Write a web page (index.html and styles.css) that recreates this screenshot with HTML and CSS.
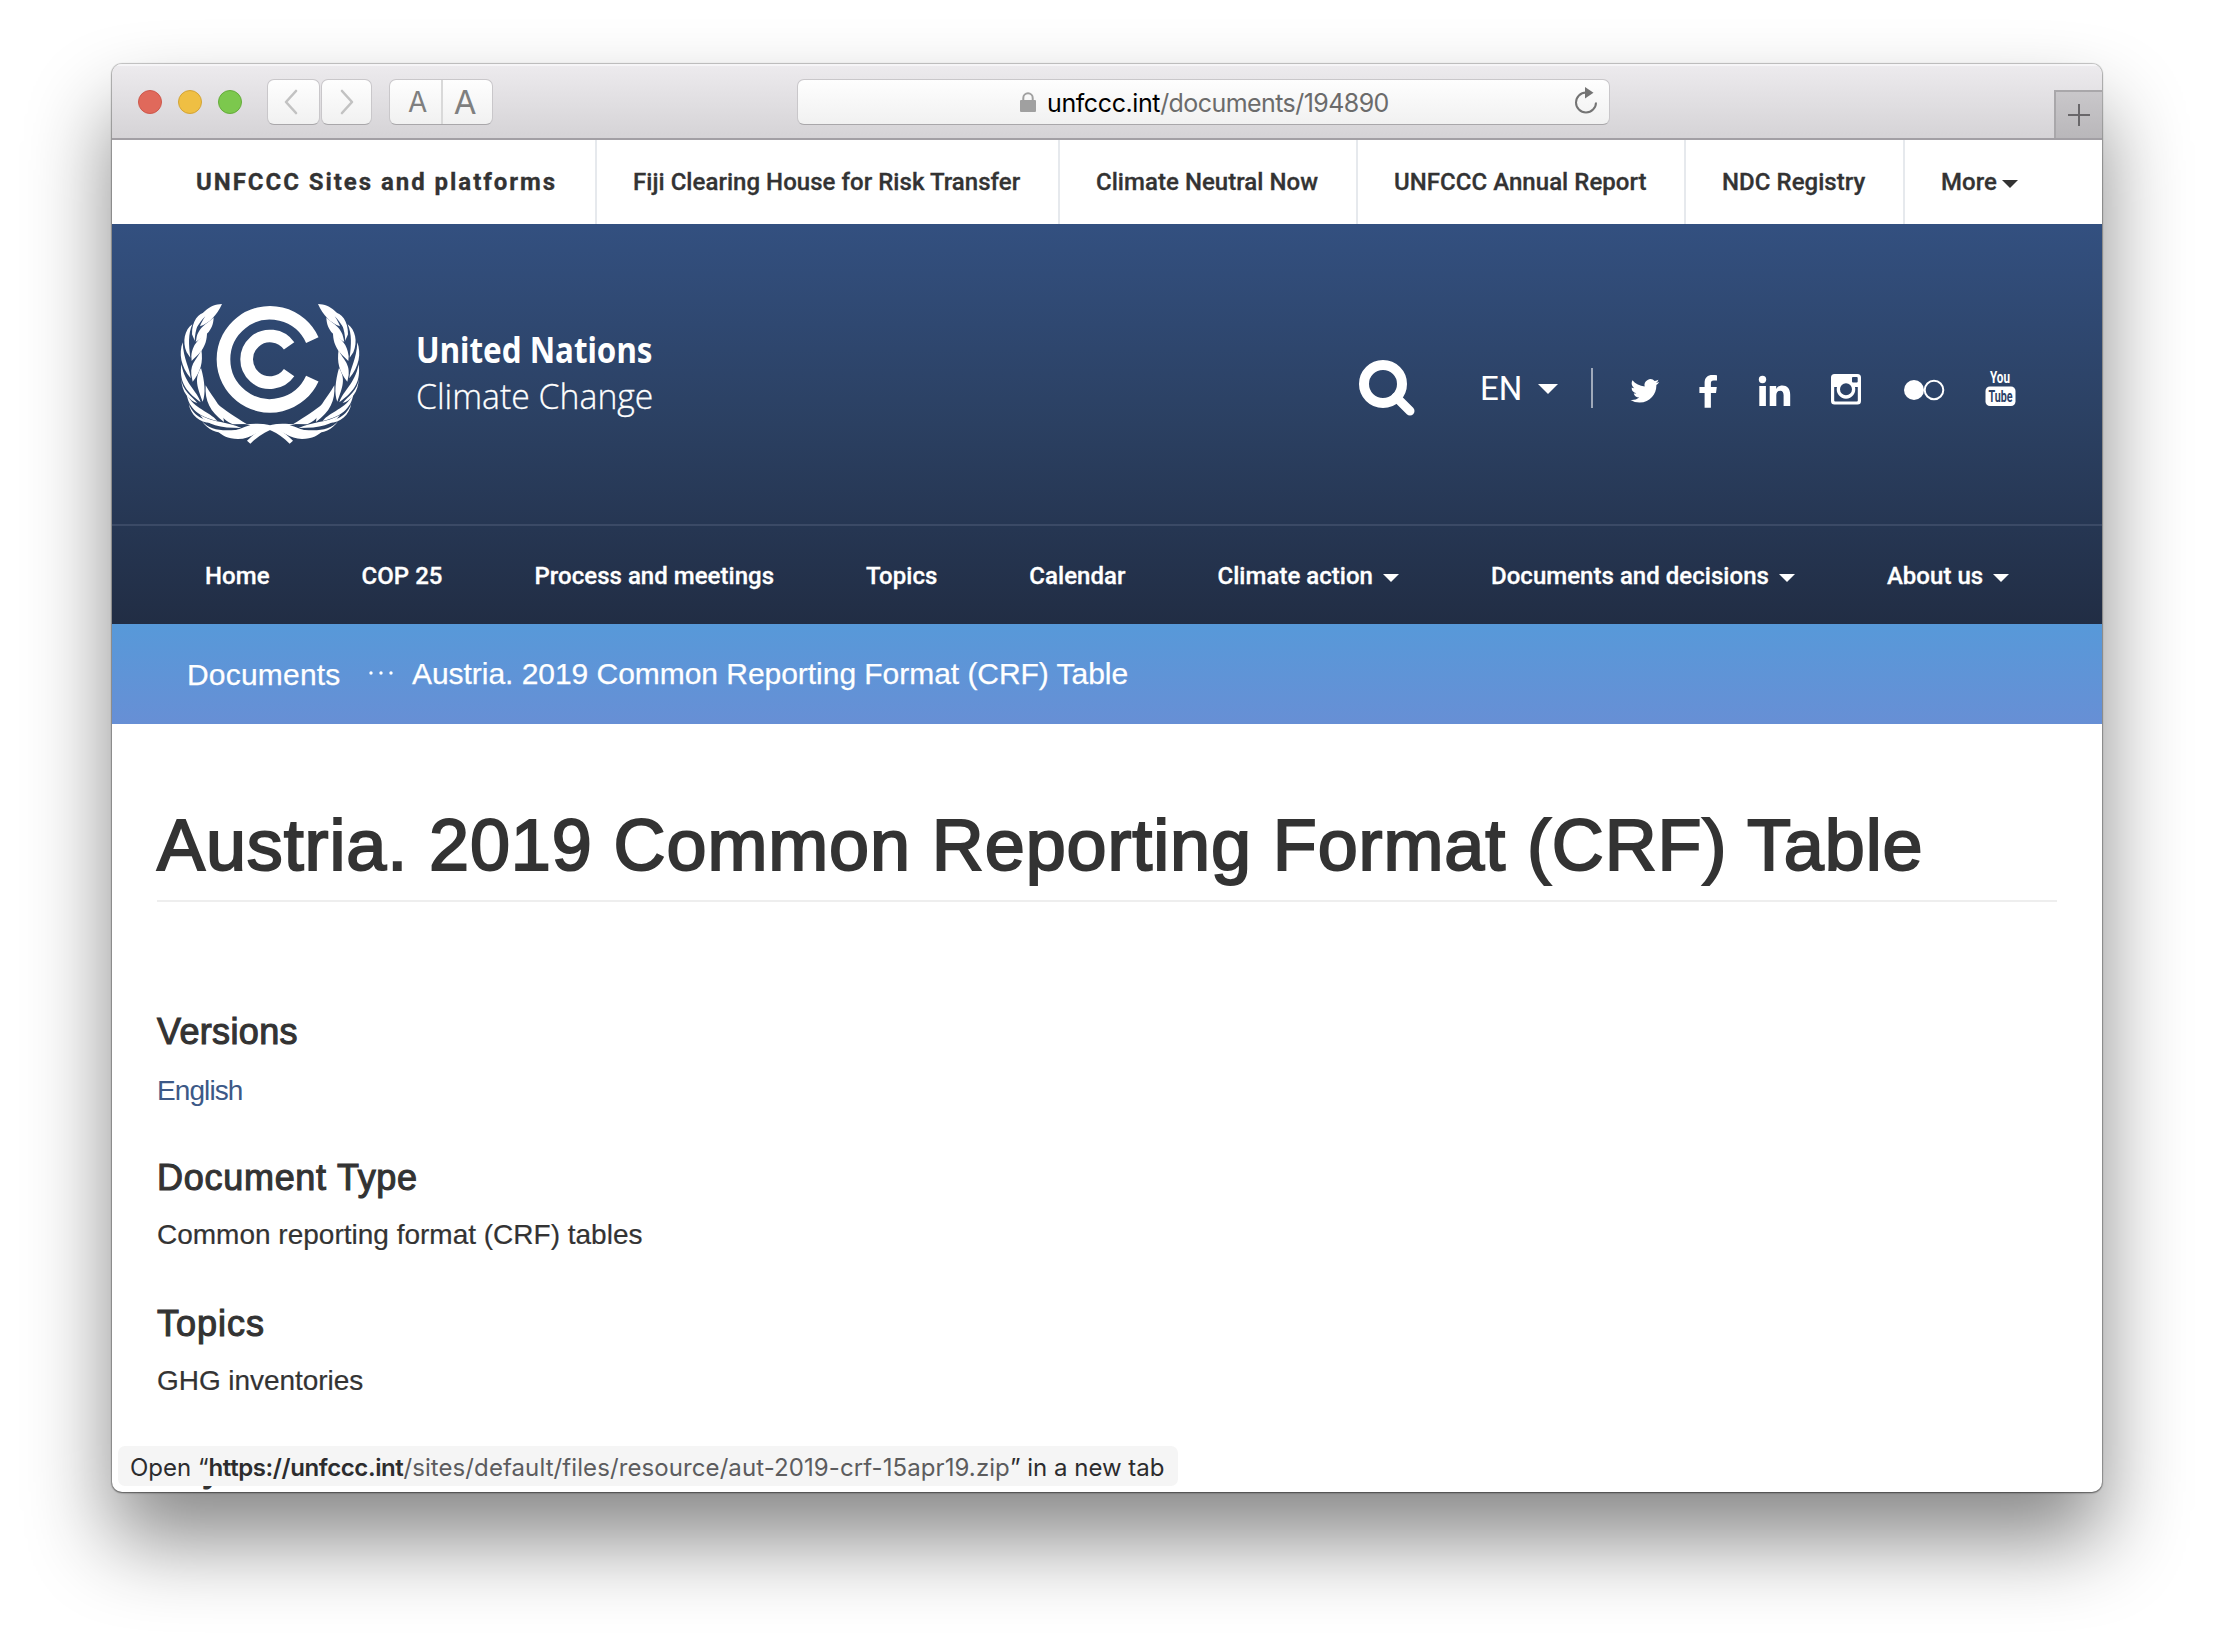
FILE: index.html
```html
<!DOCTYPE html>
<html lang="en">
<head>
<meta charset="utf-8">
<title>Austria. 2019 Common Reporting Format (CRF) Table</title>
<link rel="stylesheet" href="styles.css">
</head>
<body>
<div class="window">
  <div class="toolbar">
    <div class="lights"><i class="light red"></i><i class="light yellow"></i><i class="light green"></i></div>
    <div class="history">
      <button class="tool back"><svg width="16" height="26" viewBox="0 0 16 26"><path d="M13 2 3 13l10 11"/></svg></button>
      <button class="tool"><svg width="16" height="26" viewBox="0 0 16 26"><path d="M3 2l10 11L3 24"/></svg></button>
    </div>
    <div class="tool zoomer"><span class="small-a">A</span><span class="big-a">A</span></div>
    <div class="tool address">
      <svg class="lock" width="16" height="20" viewBox="0 0 16 20"><path d="M3.3 9V6a4.7 4.7 0 0 1 9.4 0v3" fill="none" stroke="#a0a0a0" stroke-width="2"/><rect y="8" width="16" height="12" rx="1" fill="#a0a0a0"/></svg>
      <span class="url">unfccc.int<span class="url-path">/documents/194890</span></span>
      <svg class="reload" width="24" height="28" viewBox="0 0 24 28"><path d="M12 5.5A10 10 0 1 0 22 15.500" fill="none" stroke="#747474" stroke-width="2"/><path d="M11 0l8.500 5.800L11 11.500z" fill="#747474"/></svg>
    </div>
    <div class="newtab"><svg width="22" height="22" viewBox="0 0 22 22"><path d="M11 0v22M0 11h22" stroke="#69676a" stroke-width="2"/></svg></div>
  </div>

  <nav class="sites">
    <a class="lead">UNFCCC Sites and platforms</a>
    <a>Fiji Clearing House for Risk Transfer</a>
    <a>Climate Neutral Now</a>
    <a>UNFCCC Annual Report</a>
    <a>NDC Registry</a>
    <a>More<i class="caret"></i></a>
  </nav>

  <header class="masthead">
    <div class="brandbar">
      <svg class="emblem" width="200" height="155" viewBox="0 0 600 465">
        <defs>
          <g id="branch" fill="#fff">
            <path d="M156 27C118 28 86 56 80 97C88 86 96 74 106 64C98 76 93 86 90 94C118 84 140 62 156 27Z"/>
            <path d="M110 51C84 54 66 78 66 118C70 128 73 134 74 138C76 104 84 76 110 51Z"/>
            <path d="M131 67C120 82 84 94 79 132L77 141C100 126 130 112 131 67Z"/>
            <path d="M67 88C44 104 36 140 50 172L61 188C56 148 54 118 67 88Z"/>
            <path d="M111 110C98 128 68 138 64 184L65 198C84 178 112 160 111 110Z"/>
            <path d="M38 142C26 176 32 214 62 250C60 220 40 194 38 142Z"/>
            <path d="M94 163C86 190 60 202 64 240L68 260C92 230 100 204 94 163Z"/>
            <path d="M34 208C28 256 42 286 92 322C80 286 46 268 34 208Z"/>
            <path d="M93 219C72 252 82 276 98 320C108 296 104 258 93 219Z"/>
            <path d="M34 252C36 286 66 304 82 324C58 318 34 290 34 252Z"/>
            <path d="M50 297C56 342 90 366 142 378C118 348 74 344 50 297Z"/>
            <path d="M107 271C104 318 120 350 162 381C160 338 130 312 107 271Z"/>
            <path d="M56 324C68 364 104 376 134 382C98 389 62 366 56 324Z"/>
            <path d="M90 360C110 390 150 399 214 399C176 380 130 384 90 360Z"/>
            <path d="M143 327C144 354 158 375 188 388L230 387C196 366 164 346 143 327Z"/>
            <path d="M96 378C122 410 166 409 224 402C188 422 122 422 96 378Z"/>
            <path d="M140 405C176 422 212 398 244 389C268 384 288 388 300 394C268 406 240 432 204 432C174 432 152 420 140 405Z"/>
            <path d="M231 437C256 412 280 396 306 389C330 384 352 386 378 389C340 390 288 398 241 446Z"/>
          </g>
        </defs>
        <use href="#branch"/>
        <use href="#branch" transform="translate(600 0) scale(-1 1)"/>
        <path d="M426.900 135.200A139.500 139.500 0 1 0 426.900 250.800" fill="none" stroke="#fff" stroke-width="41"/>
        <path d="M357.300 152.900A70 70 0 1 0 357.300 233.100" fill="none" stroke="#fff" stroke-width="38"/>
      </svg>
      <div class="brand"><strong>United Nations</strong><span>Climate Change</span></div>
      <div class="tools">
        <svg class="search" width="58" height="58" viewBox="0 0 58 58"><circle cx="25" cy="25" r="19" fill="none" stroke="#fff" stroke-width="10"/><path d="M38 38l14 14" stroke="#fff" stroke-width="9" stroke-linecap="round"/></svg>
        <span class="lang">EN</span><i class="caret big"></i>
        <svg class="social" width="428" height="42" viewBox="1591 367 428 42" fill="#fff">
          <path d="M1591 368h2v40h-2z" opacity=".55"/>
          <path transform="translate(1630.500 376.500) scale(1.200)" d="M23.950 4.570a10 10 0 0 1-2.820.770 4.950 4.950 0 0 0 2.160-2.720c-.950.550-2 .950-3.120 1.180a4.920 4.920 0 0 0-8.380 4.480C7.690 8.100 4.070 6.130 1.640 3.160a4.820 4.820 0 0 0-.670 2.480c0 1.710.870 3.210 2.190 4.100a4.900 4.900 0 0 1-2.230-.620v.060a4.920 4.920 0 0 0 3.950 4.830 5 5 0 0 1-2.210.080 4.940 4.940 0 0 0 4.600 3.420A9.870 9.870 0 0 1 0 19.540a13.990 13.990 0 0 0 7.550 2.210c9.050 0 14-7.500 14-13.980 0-.210 0-.420-.020-.630a9.940 9.940 0 0 0 2.420-2.570z"/>
          <path d="M1717 375.300v5.300h-3.200c-2.400 0-2.900 1.200-2.900 2.800v3.700h5.900l-.800 6h-5.100v14.600h-6.300v-14.600h-5.200v-6h5.200v-4.500c0-5.100 3.200-7.700 7.700-7.700 2.200 0 4.100.2 4.700.4z"/>
          <circle cx="1762.500" cy="379.500" r="3.700"/>
          <path d="M1759.300 386h6.600v20h-6.600zM1769.700 386h6.500v2.900c1-1.700 2.900-3.400 6.200-3.400 4.500 0 7.800 3 7.800 9.200v11.300h-6.600v-10.700c0-2.700-1-4.500-3.400-4.500-2.500 0-3.900 1.700-3.900 4.500v10.700h-6.600z"/>
          <path transform="translate(-.5 0)" fill-rule="evenodd" d="M1835 374h23a3.500 3.500 0 0 1 3.500 3.500v23.500a3.500 3.500 0 0 1-3.500 3.500h-23a3.500 3.500 0 0 1-3.500-3.500v-23.500a3.500 3.500 0 0 1 3.500-3.500zM1853.500 377a1 1 0 0 0-1 1v3.500a1 1 0 0 0 1 1h3.700a1 1 0 0 0 1-1v-3.500a1 1 0 0 0-1-1zM1834.700 387v13.500a1 1 0 0 0 1 1h21.600a1 1 0 0 0 1-1v-13.500h-2.800a9.300 9.300 0 1 1-18 0zM1846.500 383.300a6 6 0 1 0 0 12 6 6 0 0 0 0-12z"/>
          <circle cx="1914" cy="390" r="10"/><circle cx="1934" cy="390" r="9.300" fill="none" stroke="#fff" stroke-width="2"/>
          <rect x="1985.500" y="386.500" width="30" height="19.500" rx="4.500"/>
          <text class="yt" x="1990" y="382.500" textLength="20" lengthAdjust="spacingAndGlyphs">You</text>
          <text class="yt tube" x="1988.500" y="402" textLength="24" lengthAdjust="spacingAndGlyphs">Tube</text>
        </svg>
      </div>
    </div>
    <nav class="main">
      <a>Home</a><a>COP 25</a><a>Process and meetings</a><a>Topics</a><a>Calendar</a>
      <a>Climate action<i class="caret"></i></a><a>Documents and decisions<i class="caret"></i></a><a>About us<i class="caret"></i></a>
    </nav>
  </header>

  <div class="crumbs"><a>Documents</a><svg width="26" height="4" viewBox="0 0 26 4" fill="#fff"><circle cx="2" cy="2" r="1.700"/><circle cx="12" cy="2" r="1.700"/><circle cx="22" cy="2" r="1.700"/></svg><span>Austria. 2019 Common Reporting Format (CRF) Table</span></div>

  <main class="content">
    <h1>Austria. 2019 Common Reporting Format (CRF) Table</h1>
    <h2 class="w-versions">Versions</h2>
    <p class="english"><a class="link">English</a></p>
    <h2 class="w-type">Document Type</h2>
    <p>Common reporting format (CRF) tables</p>
    <h2 class="w-topics">Topics</h2>
    <p class="ghg">GHG inventories</p>
    <h2>Keywords</h2>
  </main>
  <div class="status">Open “<b>https://unfccc.int</b><span>/sites/default/files/resource/aut-2019-crf-15apr19.zip</span>” in a new tab</div>
</div>
</body>
</html>
```
FILE: styles.css
```css
* { box-sizing: border-box; }
html, body { height: 100%; }
body {
  margin: 0;
  padding: 64px 112px 0;
  background: #fff;
  color: #333;
  font-family: "Liberation Sans", Arial, sans-serif;
  overflow: hidden;
}
.window {
  position: relative;
  width: 1990px;
  height: 1428px;
  border-radius: 10px;
  overflow: hidden;
  background: #fff;
  box-shadow: 0 0 1px 1px rgba(0, 0, 0, .22), 0 1px 2px rgba(0, 0, 0, .4), 0 48px 84px rgba(0, 0, 0, .47);
}
.toolbar {
  display: flex;
  height: 76px;
  padding: 15px 0 0 26px;
  background: linear-gradient(#edebee, #d5d3d6);
  border-bottom: 2px solid #a29fa4;
  box-shadow: inset 0 2px 0 #f6f5f7;
}
.lights { display: flex; gap: 16px; padding-top: 11px; width: 129px; }
.light { width: 24px; height: 24px; border-radius: 50%; border: 1px solid; }
.red { background: #e0695b; border-color: #cd584c; }
.yellow { background: #efbf43; border-color: #d3a436; }
.green { background: #7cc84d; border-color: #65ac3b; }
.tool {
  height: 46px;
  margin: 0;
  padding: 0;
  border: 1px solid #c9c7ca;
  border-bottom-color: #a9a7aa;
  border-radius: 7px;
  background: linear-gradient(#fefefe, #f1f1f1);
}
.history { display: flex; gap: 1px; width: 122px; }
.history .tool { width: 51px; display: grid; place-items: center; }
.history .back { width: 53px; padding-right: 5px; }
.history path { fill: none; stroke: #c2c2c2; stroke-width: 2.600; stroke-linecap: round; stroke-linejoin: round; }
.zoomer { display: flex; width: 104px; font-family: Inter, sans-serif; color: #7f7f7f; }
.zoomer span { flex: 1; text-align: center; line-height: 45px; }
.zoomer .small-a { padding-left: 5px; border-right: 2px solid #d9d9d9; font-size: 28px; }
.zoomer .big-a { padding-right: 4px; font-size: 33px; }
.address {
  display: flex;
  align-items: center;
  width: 813px;
  margin-left: 304px;
  padding: 0 11px 0 222px;
  font: 25px Inter, sans-serif;
}
.lock { margin: -1px 11px 0 0; }
.url { padding-top: 2px; color: #000; letter-spacing: -.4px; }
.url-path { color: #6b6b6b; letter-spacing: -.57px; }
.reload { margin: -2px 0 0 auto; }
.newtab {
  display: grid;
  place-items: center;
  width: 48px;
  height: 48px;
  margin: 11px 0 0 auto;
  background: linear-gradient(#c9c7ca, #b9b7ba);
  border: solid #a9a7aa;
  border-width: 2px 0 0 2px;
}
.sites {
  display: grid;
  grid-template-columns: 485px 463px 298px 328px 219px 197px;
  height: 84px;
  font: 500 24px/84px Roboto, sans-serif;
  letter-spacing: .04px;
  -webkit-text-stroke: .3px #333;
}
.sites a { padding-left: 36px; border-right: 2px solid #e6e9ed; white-space: nowrap; }
.sites a:last-child { border: 0; }
.sites .lead { padding-left: 84px; font-weight: 700; letter-spacing: 1.960px; }
.caret {
  display: inline-block;
  margin-left: 10px;
  vertical-align: 2px;
  border: solid transparent;
  border-width: 8px 8px 0;
  border-top-color: currentColor;
}
.sites .caret { margin-left: 5px; }
.masthead { height: 400px; color: #fff; background: linear-gradient(#335080, #2b4062 50%, #212d44); }
.brandbar { display: flex; height: 302px; padding-left: 58px; border-bottom: 2px solid #3b4a66; }
.emblem { margin-top: 71px; }
.brand { width: 260px; margin: 103px 0 0 46px; font-family: "Noto Sans", sans-serif; font-size: 35px; line-height: 46px; white-space: nowrap; }
.brand strong, .brand span { display: block; transform-origin: left; }
.brand strong { transform: scaleX(.895); }
.brand span { font-family: "Open Sans", sans-serif; font-weight: 300; transform: scaleX(.965); -webkit-text-stroke: .3px #fff; }
.tools { display: flex; margin-left: 682px; padding-top: 135px; }
.lang { margin: 7px 0 0 64px; width: 45px; font: 33px/46px Roboto, sans-serif; }
.caret.big { height: 10px; margin: 25px 33px 0 13px; border-width: 10px 10px 0; }
.social { margin-top: 8px; }
.yt { font: 700 17px Roboto, sans-serif; }
.tube { fill: #2c4166; }
.main { display: flex; gap: 92px; padding-left: 93px; font: 500 24px/101px Roboto, sans-serif; letter-spacing: .03px; white-space: nowrap; -webkit-text-stroke: .3px #fff; }
.main a { height: 98px; }
.crumbs {
  display: flex;
  height: 100px;
  padding-left: 75px;
  color: #fff;
  font-size: 30px;
  line-height: 100px;
  letter-spacing: -.04px;
  background: linear-gradient(#5799d9, #678fd5);
  -webkit-text-stroke: .25px #fff;
}
.crumbs a { width: 182px; padding-top: 1px; letter-spacing: .2px; }
.crumbs svg { margin: 47px 17px 0 0; }
.content { padding: 0 45px; }
h1 {
  height: 178px;
  margin: 0;
  padding-top: 80px;
  border-bottom: 2px solid #eee;
  font-size: 72px;
  line-height: 82px;
  font-weight: 400;
  letter-spacing: .88px;
  -webkit-text-stroke: 2px #333;
  white-space: nowrap;
}
h2 { margin: 0; font-size: 36px; line-height: 40px; font-weight: 400; letter-spacing: .8px; -webkit-text-stroke: 1.100px #333; }
.w-versions { padding-top: 110px; letter-spacing: .35px; }
.w-type { letter-spacing: .72px; }
.w-topics { letter-spacing: 1px; }
p { margin: 0; height: 106px; padding-top: 20px; font-size: 28px; line-height: 34px; -webkit-text-stroke: .2px #333; }
p.english { padding-top: 22px; -webkit-text-stroke: 0; letter-spacing: -.9px; }
p.ghg { height: 105px; letter-spacing: -.05px; }
.link { color: #3c5987; }
.status {
  position: absolute;
  left: 6px;
  top: 1382px;
  width: 1060px;
  height: 40px;
  padding-left: 12px;
  border-radius: 7px;
  background: #f5f5f5;
  font: 24px/43px Inter, sans-serif;
  color: #2c2c2e;
  white-space: nowrap;
}
.status b { font-weight: 600; letter-spacing: -.4px; }
.status span { color: #5c5c5e; letter-spacing: .09px; }
```
